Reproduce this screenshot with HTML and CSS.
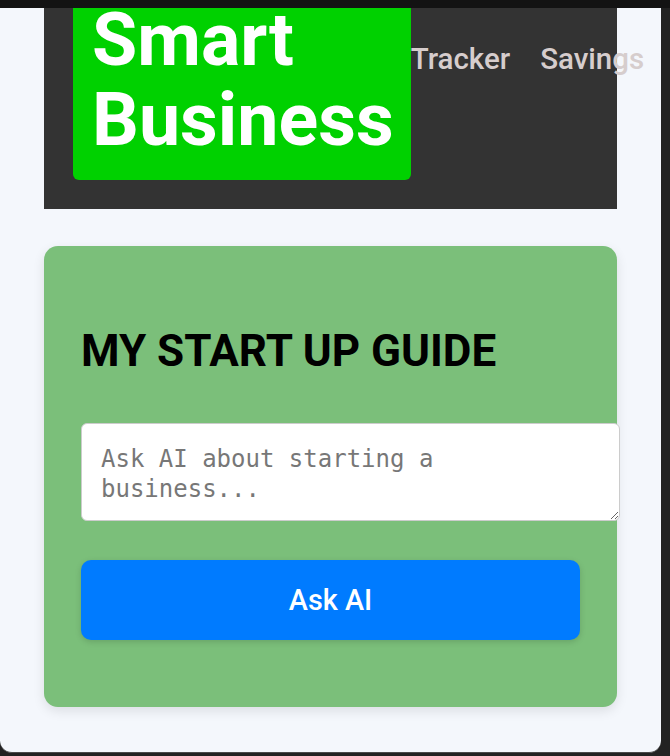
FILE: index.html
```html
<!DOCTYPE html>
<html lang="en">
<head>
<meta charset="utf-8">
<title>Smart Business</title>
<link rel="stylesheet" href="styles.css">
</head>
<body>
<div class="topbar"></div>
<div class="viewport">
  <div class="page">
    <header class="header">
      <div class="logo">Smart<br>Business</div>
      <nav class="nav">
        <a class="nav-link" href="#">Tracker</a>
        <a class="nav-link" href="#">Savings</a>
      </nav>
    </header>
    <section class="card">
      <h2 class="card-title">MY START UP GUIDE</h2>
      <textarea class="ask-input" placeholder="Ask AI about starting a business..."></textarea>
      <button class="ask-btn" type="button">Ask AI</button>
    </section>
  </div>
</div>
</body>
</html>
```
FILE: styles.css
```css
* { box-sizing: content-box; }
html, body {
  margin: 0;
  padding: 0;
  background: #222222;
  font-family: Roboto, "Liberation Sans", sans-serif;
  height: 756px;
  overflow: hidden;
}
.topbar {
  height: 8px;
  background: #131313;
}
.viewport {
  width: 661px;
  height: 744px;
  background: #f4f7fc;
  border-radius: 0 0 12px 12px;
  overflow: hidden;
  border-bottom: 1px solid #4a4a4a;
}
.page {
  margin-top: -18px;
  padding: 0 44px;
}
.header {
  display: flex;
  align-items: flex-start;
  background: #333333;
  padding: 0 0 29px 29px;
}
.logo {
  flex: none;
  background: #00d100;
  color: #ffffff;
  font-weight: 700;
  font-size: 73.5px;
  line-height: 80px;
  padding: 10px 17px 20px 19px;
  border-radius: 6px;
}
.nav {
  flex: none;
  display: flex;
  gap: 30px;
  margin-top: 52px;
}
.nav-link {
  color: #d6cdcd;
  text-decoration: none;
  font-size: 29.5px;
  font-weight: 500;
}
.card {
  margin-top: 37px;
  background: #7bbf7a;
  border-radius: 14px;
  padding: 79px 37px 67px 37px;
  box-shadow: 0 4px 12px rgba(0, 0, 0, 0.1);
}
.card-title {
  margin: 0;
  font-size: 44px;
  font-weight: 700;
  color: #000000;
}
.ask-input {
  display: block;
  width: 100%;
  margin: 46px 0 0 0;
  padding: 20px 19px 16px 19px;
  border: 1px solid #cccccc;
  border-radius: 6px;
  background: #ffffff;
  font-family: "DejaVu Sans Mono", monospace;
  font-size: 24px;
  line-height: 30px;
  height: 60px;
  resize: vertical;
  color: #333;
}
.ask-input::placeholder {
  color: #777777;
}
.ask-btn {
  display: block;
  box-sizing: border-box;
  width: 100%;
  height: 80px;
  margin-top: 39px;
  border: none;
  border-radius: 10px;
  background: #007bff;
  color: #ffffff;
  font-family: Roboto, "Liberation Sans", sans-serif;
  font-size: 28.8px;
  font-weight: 500;
  box-shadow: 0 2px 6px rgba(0, 0, 0, 0.15);
}
```
